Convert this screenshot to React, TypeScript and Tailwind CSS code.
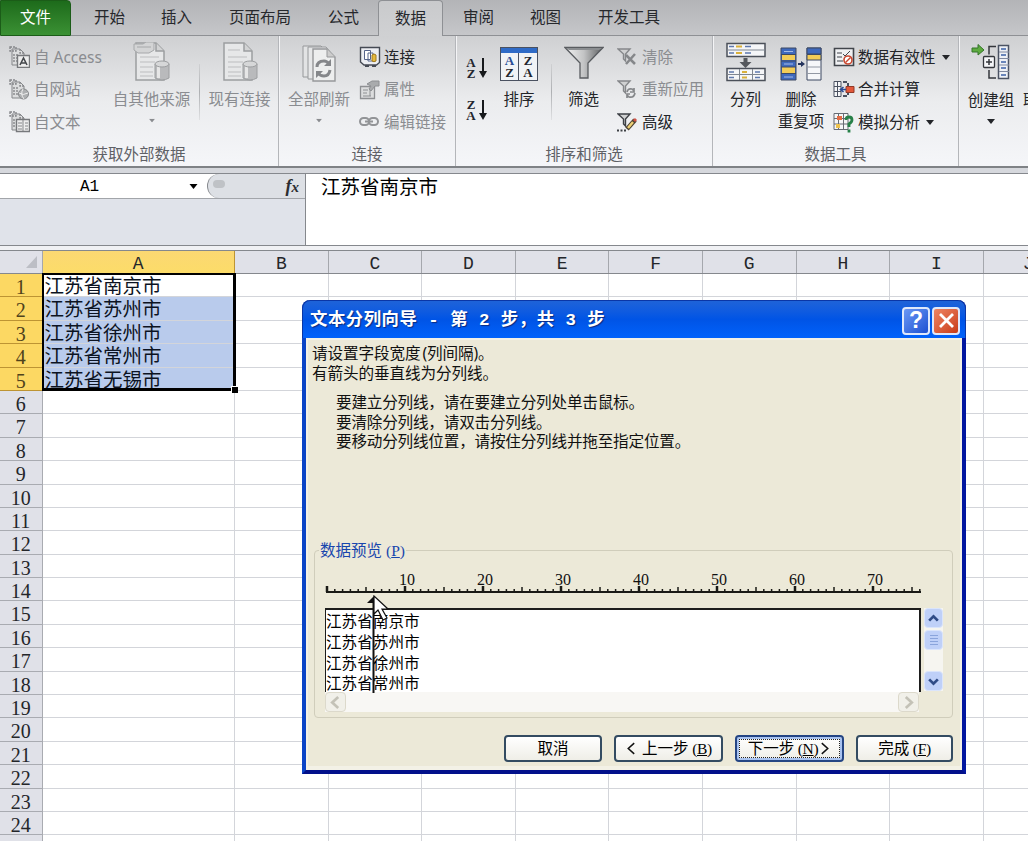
import type { ReactNode } from "react";

const COLUMNS = ["B", "C", "D", "E", "F", "G", "H", "I"];
const ROWS = Array.from({ length: 25 }, (_, i) => i + 1);
const CITIES = ["江苏省南京市", "江苏省苏州市", "江苏省徐州市", "江苏省常州市", "江苏省无锡市"];

function Caret({ className = "" }: { className?: string }) {
  return (
    <svg className={className} width="8" height="5" viewBox="0 0 8 5">
      <path d="M0 0h8L4 5z" fill="currentColor" />
    </svg>
  );
}

/* ---------- ribbon icons ---------- */

function ImportIcon({ kind }: { kind: "access" | "web" | "text" }) {
  return (
    <svg width="21" height="22" viewBox="0 0 21 22" fill="none" stroke="#85878a">
      <path d="M3 3h8l4 4v12H3z" fill="#dcddde" />
      <path d="M1 1h6v4H1zM11 3v4h4M5 8v9M8 8v9" strokeDasharray="2 1" strokeWidth="1.4" />
      {kind === "access" && (
        <>
          <path d="M8.5 9.5h12v12h-12z" fill="#eee" stroke="#77797c" strokeWidth="1.4" />
          <path d="M11 19l3.5-7 3.5 7M12 17h5" stroke="#45484c" strokeWidth="1.6" />
        </>
      )}
      {kind === "web" && (
        <>
          <circle cx="14.5" cy="15" r="5" fill="#adafb1" />
          <path d="M10 14q4 3 9 0M14 10q-3 5 1 10" stroke="#eee" />
        </>
      )}
      {kind === "text" && (
        <>
          <path d="M7.5 8.5h13v12h-13z" fill="#eee" stroke="#77797c" strokeWidth="1.4" />
          <path d="M14 9v11M9 12h4M9 15h4M9 18h4M16 12h3M16 15h3M16 18h3" />
        </>
      )}
    </svg>
  );
}

function SourceIcon({ layered }: { layered?: boolean }) {
  return (
    <svg width="38" height="40" viewBox="0 0 38 40" fill="none" stroke="#9c9ea0">
      <path d="M3 1h20l8 8v29H3z" fill="#e6e7e8" strokeWidth="1.5" />
      <path d="M23 1v8h8" fill="#d2d3d4" strokeWidth="1.5" />
      <path d="M7 15h19M7 20h15M7 25h13M7 30h13M7 34h13" stroke="#bcbdbf" />
      {layered ? <path d="M1 2h9l3-2h8v8l-5 3H5l-4-3zM4 5h14" fill="#d3d4d5" stroke="#a6a8aa" /> : <path d="M7 8h12" stroke="#bcbdbf" />}
      <path d="M22 22v14q7 4 14 0V22" fill="#b9babc" />
      <path d="M24 23v13h3V23z" fill="#e6e6e6" stroke="none" />
      <ellipse cx="29" cy="22" rx="7" ry="3" fill="#d6d7d8" />
    </svg>
  );
}

function RefreshIcon() {
  return (
    <svg width="35" height="37" viewBox="0 0 35 37" fill="none" stroke="#96989a">
      <path d="M1 1h18l5 5v26H1z" fill="#e2e3e4" />
      <path d="M6 2h18l4 5v27H6z" fill="#e6e7e8" />
      <path d="M11 4h14l8 8v24H11z" fill="#edeeee" strokeWidth="1.4" />
      <path d="M25 4v8h8" fill="#ccc" />
      <path d="M15 22q0-6 7-6 3 0 5 3M28 25q-1 6-6 6-4 0-6-3" stroke="#85878a" strokeWidth="3" />
      <path d="M29 14v7h-7zM14 33v-7h7z" fill="#85878a" stroke="none" />
    </svg>
  );
}

function ConnectIcon() {
  return (
    <svg width="22" height="22" viewBox="0 0 22 22" fill="none" stroke="#454a54">
      <path d="M1.5 1.500h19v15l-3 2.500H5l-3.500-3z" fill="#eceef2" strokeWidth="1.4" />
      <path d="M5.5 4.500h6v9h-6zM9 7h5v8H9z" fill="#fff" stroke="#55648a" />
      <path d="M13 9v6q2 1.500 4 0V9q-2-2-4 0z" fill="#e5b93c" stroke="#9d7820" />
      <path d="M6 20h4M13 20h4" strokeWidth="2" />
    </svg>
  );
}

function PropsIcon() {
  return (
    <svg width="22" height="20" viewBox="0 0 22 20" fill="none" stroke="#8e9093">
      <path d="M1.5 6.500h14v12h-14z" fill="#dcddde" strokeWidth="1.3" />
      <path d="M4 10h5M4 13h4M4 16h8M11 10v6" />
      <path d="M8 4l5-3h7v5h-4l-4 5-2-2 2-3z" fill="#a9abad" />
    </svg>
  );
}

function LinkIcon() {
  return (
    <svg width="20" height="12" viewBox="0 0 20 12" fill="none" stroke="#929497" strokeWidth="2">
      <rect x="1" y="2" width="9" height="7" rx="3.5" />
      <rect x="10" y="2" width="9" height="7" rx="3.5" />
      <path d="M6 5.500h8" />
    </svg>
  );
}

function SortIcon({ top, bottom }: { top: string; bottom: string }) {
  return (
    <div className="flex items-center gap-[3px]">
      <div className="flex w-[10px] flex-col items-center font-['Liberation_Serif',serif] text-[13px] font-bold leading-[11px] text-[#23262e]">
        <span>{top}</span>
        <span>{bottom}</span>
      </div>
      <svg width="8" height="22" viewBox="0 0 8 22">
        <path d="M3 1h2v13h3l-4 7-4-7h3z" fill="#17191c" />
      </svg>
    </div>
  );
}

function SortDialogIcon() {
  return (
    <div className="h-[34px] w-[38px] border-[1.5px] border-[#4a5160] bg-[#f1f3f6]">
      <div className="h-[5px] bg-[#2f6bc7]" />
      <div className="grid h-[27px] grid-cols-2 divide-x divide-[#4a5160] text-center font-['Liberation_Serif',serif] text-[13px] font-bold leading-[12px] text-[#23262e]">
        <div className="pt-0.5">
          <p className="text-[#274c94]">A</p>
          <p>Z</p>
        </div>
        <div className="pt-0.5">
          <p>Z</p>
          <p>A</p>
        </div>
      </div>
    </div>
  );
}

function FunnelIcon() {
  return (
    <svg width="40" height="34" viewBox="0 0 40 34">
      <defs>
        <linearGradient id="funnel">
          <stop offset="0" stopColor="#f4f4f4" />
          <stop offset="0.5" stopColor="#c2c3c4" />
          <stop offset="1" stopColor="#5c5e60" />
        </linearGradient>
      </defs>
      <path d="M1 1.500h38L24 17v15h-8V17z" fill="url(#funnel)" stroke="#595c60" strokeWidth="1.3" />
      <path d="M2 2h36l-3 2H5z" fill="#8b8e91" />
    </svg>
  );
}

function FilterIcon({ kind }: { kind: "clear" | "again" | "more" }) {
  const ink = kind === "more" ? "#3d4045" : "#85878a";
  return (
    <svg width="21" height="21" viewBox="0 0 21 21" fill="none" stroke={ink} strokeWidth="1.4">
      <path d="M1 2h12L8.500 7v7l-2-2V7z" fill="#d0d1d2" />
      {kind === "clear" && <path d="M9 8l9 9M18 7l-9 10" strokeWidth="2.5" />}
      {kind === "again" && <path d="M10 13q1-4 5-3l2 2M18 14q-1 5-6 4l-2-2M17 9v4h-4M10 19v-4h3" strokeWidth="1.7" />}
      {kind === "more" && (
        <>
          <path d="M0 18.500h10" strokeDasharray="2 1.5" strokeWidth="2" />
          <path d="M10 17l8-9" stroke="#4b4030" strokeWidth="4.5" />
          <path d="M11 16l5-6" stroke="#edcf74" strokeWidth="2.5" />
          <path d="M17 9l2-2" stroke="#cf5146" strokeWidth="3" />
        </>
      )}
    </svg>
  );
}

function SplitIcon() {
  return (
    <svg width="40" height="40" viewBox="0 0 40 40" fill="none" stroke="#4b5059">
      <path d="M1 1.500h38v13H1zM1 26.500h38v12H1z" fill="#f5f6f8" strokeWidth="1.5" />
      <path d="M1 8h38M1 32.500h38M13.500 27v11M26.500 27v11" stroke="#7f8690" />
      <path d="M3 4.500h5M19 4.500h6M3 11h5M19 11h6M3 30h5M29 30h5M3 35.500h5M29 35.500h5" stroke="#5f79ad" strokeWidth="1.4" />
      <path d="M10 4.500h6M10 11h6M16 30h5M16 35.500h5" stroke="#d9b03b" strokeWidth="2" />
      <path d="M17.500 16h4v4h4l-6 6-6-6h4z" fill="#55585d" stroke="none" />
    </svg>
  );
}

function DedupeIcon() {
  return (
    <svg width="42" height="34" viewBox="0 0 42 34" stroke="#3d4963">
      <path d="M1 1h15v32H1z" fill="#3e69bd" />
      <path d="M2 8h13v5H2zM2 20h13v6H2z" fill="#f2cc57" stroke="none" />
      <path d="M1 7.500h15M1 14h15M1 20h15M1 26.500h15" />
      <path d="M4 4.500h9M4 17h9M4 30h9" stroke="#a5bbe6" />
      <path d="M27 1h14v32H27z" fill="#f6f7f9" />
      <path d="M27 1h14v6H27z" fill="#3e69bd" />
      <path d="M27 7.500h14v5.500H27z" fill="#f2cc57" />
      <path d="M27 20h14M27 26.500h14" stroke="#9298a3" />
      <path d="M18 16h3v-2l4 3-4 3v-2h-3z" fill="#24345e" stroke="none" />
    </svg>
  );
}

function ValidityIcon() {
  return (
    <svg width="22" height="20" viewBox="0 0 22 20" fill="none" stroke="#41454b">
      <path d="M1.5 1.500h19v17h-19z" fill="#f0f1f3" strokeWidth="1.6" />
      <path d="M4 6h5M4 10h5M4 14h6M10 7l2 2 5-5" />
      <circle cx="15" cy="13" r="4" fill="#fff" stroke="#c9472f" strokeWidth="1.6" />
      <path d="M12.500 15.500l5-5" stroke="#c9472f" strokeWidth="1.5" />
    </svg>
  );
}

function MergeIcon() {
  return (
    <svg width="22" height="19" viewBox="0 0 22 19" fill="none" stroke="#4a5160">
      <path d="M1 1.500h7v15H1zM1 6.500h7M1 11.500h7M4.500 2v14" fill="#f5f6f8" />
      <path d="M10 2h4M10 16h4M15 3v3M15 13v2" strokeWidth="2" />
      <path d="M13 6.500h8v6h-8z" fill="#e2583b" stroke="#913a29" />
      <path d="M13 9.500H8M10.500 7l-3 2.500 3 2.500" stroke="#2c4d96" strokeWidth="1.6" />
    </svg>
  );
}

function WhatIfIcon() {
  return (
    <svg width="22" height="21" viewBox="0 0 22 21" fill="none" stroke="#666b73">
      <path d="M1 1.500h14v16H1z" fill="#f6f6f7" />
      <path d="M1 6.500h14M1 12h14M5.500 2v15M10.500 2v15" />
      <path d="M4 4h5v4H4z" fill="#e36b45" stroke="none" />
      <path d="M3 12h4v4H3z" fill="#eec24c" stroke="none" />
      <path d="M13 8q0-3 3-3t3 3q0 2-3 4v3M16 17.500v3" stroke="#278048" strokeWidth="2.8" />
    </svg>
  );
}

function GroupIcon() {
  return (
    <svg width="40" height="36" viewBox="0 0 40 36" fill="none" stroke="#34373c">
      <path d="M1 4h6V.5l6 5.500-6 5V8H1z" fill="#5dab3f" stroke="#35752a" />
      <path d="M25 2.500h-7v8M18 26v8h7" strokeWidth="1.5" />
      <rect x="12.5" y="12.5" width="11" height="11" rx="1" fill="#f5f6f8" strokeWidth="1.3" />
      <path d="M15 18h6M18 15v6" strokeWidth="1.5" />
      <path d="M27.500 1.500h10v33h-10z" fill="#eef1f6" stroke="#4b5363" strokeWidth="1.5" />
      <path d="M28 8h10M28 14.500h10M28 21h10M28 27.500h10" stroke="#8089a0" />
      <path d="M30 5h5M30 11h5M30 18h5M30 24h5M30 31h5" stroke="#3c61a8" strokeWidth="1.5" />
    </svg>
  );
}

/* ---------- ribbon ---------- */

function RibbonGroup({ label, className, children }: { label: string; className: string; children: ReactNode }) {
  return (
    <section className={`flex shrink-0 flex-col border-r border-[#b4b6ba] shadow-[1px_0_0_#f4f4f6] ${className}`}>
      <div className="flex h-[104px]">{children}</div>
      <p className="pt-px text-center leading-[28px] text-[#5f6166]">{label}</p>
    </section>
  );
}

function SmallButton({ icon, label, muted, menu }: { icon: ReactNode; label: string; muted?: boolean; menu?: boolean }) {
  return (
    <div className={`flex h-[32.5px] items-center whitespace-nowrap ${muted ? "text-[#8a8c90]" : "text-[#232529]"}`}>
      <span className="flex w-[25px] shrink-0">{icon}</span>
      {label}
      {menu && <Caret className="ml-1.5" />}
    </div>
  );
}

function BigButton({ icon, lines, muted, menu, className }: { icon: ReactNode; lines: string[]; muted?: boolean; menu?: boolean; className: string }) {
  return (
    <div className={`flex shrink-0 flex-col items-center pt-1.5 whitespace-nowrap ${muted ? "text-[#8a8c90]" : "text-[#232529]"} ${className}`}>
      <div className="flex h-[46px] items-start">{icon}</div>
      {lines.map((line) => (
        <span key={line} className="leading-[22px]">{line}</span>
      ))}
      {menu && <Caret className={muted ? "mt-2 scale-75" : "mt-2"} />}
    </div>
  );
}

function Separator() {
  return <div className="mt-7 h-14 w-px shrink-0 bg-gradient-to-b from-[#cfd0d2] via-[#aeb0b3] to-[#e0e1e3]" />;
}

function Tabs() {
  const tab = "flex items-center justify-center shrink-0";
  return (
    <nav className="flex h-9 bg-gradient-to-b from-[#b3b4b7] to-[#c6c7ca] text-[15.5px] text-[#26282c]">
      <div className={`${tab} w-[71px] rounded-tr-sm border border-[#1b5c18] bg-gradient-to-b from-[#1d6b1b] to-[#3b9134] text-white`}>文件</div>
      <div className="flex flex-1 border-b border-[#8e9094]">
        <div className={`${tab} w-[77px]`}>开始</div>
        <div className={`${tab} w-[57px]`}>插入</div>
        <div className={`${tab} w-[110px]`}>页面布局</div>
        <div className={`${tab} w-[57px]`}>公式</div>
        <div className={`${tab} -mb-px ml-1.5 w-[65px] rounded-t border border-b-0 border-[#8e9094] bg-gradient-to-b from-[#c9cacc] to-[#d0d1d3]`}>数据</div>
        <div className={`${tab} w-[71px]`}>审阅</div>
        <div className={`${tab} w-[63px]`}>视图</div>
        <div className={`${tab} w-[104px]`}>开发工具</div>
      </div>
    </nav>
  );
}

function Ribbon() {
  return (
    <div className="flex h-[132px] overflow-hidden border-b-2 border-[#7f8286] bg-gradient-to-b from-[#cfd0d2] via-[#ebecee] to-[#f5f6f9] text-[15.5px]">
      <RibbonGroup label="获取外部数据" className="w-[279px]">
        <div className="w-[104px] shrink-0 pt-[5px] pl-[9px]">
          <SmallButton muted icon={<ImportIcon kind="access" />} label="自 Access" />
          <SmallButton muted icon={<ImportIcon kind="web" />} label="自网站" />
          <SmallButton muted icon={<ImportIcon kind="text" />} label="自文本" />
        </div>
        <BigButton muted menu className="w-[95px]" icon={<SourceIcon layered />} lines={["自其他来源"]} />
        <Separator />
        <BigButton muted className="w-[79px]" icon={<SourceIcon />} lines={["现有连接"]} />
      </RibbonGroup>
      <RibbonGroup label="连接" className="w-[177px]">
        <BigButton muted menu className="w-[80px] pt-[9px] [&>div]:h-[43px]" icon={<RefreshIcon />} lines={["全部刷新"]} />
        <div className="pt-[5px]">
          <SmallButton icon={<ConnectIcon />} label="连接" />
          <SmallButton muted icon={<PropsIcon />} label="属性" />
          <SmallButton muted icon={<LinkIcon />} label="编辑链接" />
        </div>
      </RibbonGroup>
      <RibbonGroup label="排序和筛选" className="w-[257px]">
        <div className="flex w-[31px] shrink-0 flex-col gap-5 pt-[21px] pl-[10px]">
          <SortIcon top="A" bottom="Z" />
          <SortIcon top="Z" bottom="A" />
        </div>
        <BigButton className="w-[64px] pt-[11px] [&>div]:h-[41px]" icon={<SortDialogIcon />} lines={["排序"]} />
        <Separator />
        <BigButton className="w-[63px] pt-[10px] [&>div]:h-[42px]" icon={<FunnelIcon />} lines={["筛选"]} />
        <div className="pt-[5px] pl-[2px]">
          <SmallButton muted icon={<FilterIcon kind="clear" />} label="清除" />
          <SmallButton muted icon={<FilterIcon kind="again" />} label="重新应用" />
          <SmallButton icon={<FilterIcon kind="more" />} label="高级" />
        </div>
      </RibbonGroup>
      <RibbonGroup label="数据工具" className="w-[246px]">
        <BigButton className="w-[65px]" icon={<SplitIcon />} lines={["分列"]} />
        <BigButton className="w-[46px] pt-[11px] [&>div]:h-[41px]" icon={<DedupeIcon />} lines={["删除", "重复项"]} />
        <div className="pt-[5px] pl-[9px]">
          <SmallButton menu icon={<ValidityIcon />} label="数据有效性" />
          <SmallButton icon={<MergeIcon />} label="合并计算" />
          <SmallButton menu icon={<WhatIfIcon />} label="模拟分析" />
        </div>
      </RibbonGroup>
      <div className="flex shrink-0 text-[#232529]">
        <BigButton menu className="w-[64px] pt-2 [&>div]:h-[45px]" icon={<GroupIcon />} lines={["创建组"]} />
        <span className="pt-[53px] leading-[22px]">取</span>
      </div>
    </div>
  );
}

function FormulaBar() {
  return (
    <div className="flex h-[73px] border-y border-[#85888d] bg-[#e0e3ea]">
      <div className="flex h-[25px] w-[305px] shrink-0 border-b border-[#a2a5aa] bg-white">
        <div className="flex w-[207px] items-center pl-[80px] pt-px font-['Liberation_Mono',monospace] text-[16px] text-black">
          A1
          <Caret className="ml-auto mr-[8px] w-[11px]" />
        </div>
        <div className="flex flex-1 items-center justify-between rounded-l-full border-l border-[#85888d] bg-[#dde0e5] pr-[6px] pl-[5px]">
          <span className="mb-1 h-2 w-3 rounded-full bg-[#bfc2c6]" />
          <span className="font-['Liberation_Serif',serif] text-[18px] font-bold italic leading-none text-[#2b2d31]">
            f<span className="text-[15px]">x</span>
          </span>
        </div>
      </div>
      <div className="flex-1 border-l border-[#85888d] bg-white pl-[15px] text-[19.5px] leading-[25px] text-black">江苏省南京市</div>
    </div>
  );
}

function Sheet() {
  return (
    <div className="overflow-hidden">
      <div className="flex h-6 w-[1100px] border-y border-[#85888d] bg-[#e0e1e8] font-['Liberation_Mono',monospace] text-[18px] leading-[27px] text-[#24262a]">
        <div className="flex w-[42.5px] shrink-0 items-end justify-end border-r border-[#a5a7ad] p-[5px]">
          <svg width="11" height="12" viewBox="0 0 11 12"><path d="M11 0v12H0z" fill="#bcbec5" /></svg>
        </div>
        <div className="w-[192.5px] shrink-0 border-r border-[#bd9433] bg-gradient-to-b from-[#fbd872] to-[#fcdc69] text-center">A</div>
        {COLUMNS.map((name) => (
          <div key={name} className="w-[93.6px] shrink-0 border-r border-[#a5a7ad] text-center">{name}</div>
        ))}
        <div className="pl-[39px]">J</div>
      </div>
      <div className="relative w-[1100px] bg-white">
        {ROWS.map((n) => (
          <div key={n} className="flex h-[23.4px]">
            <div
              className={`w-[42.5px] shrink-0 border-r border-b text-center font-['Liberation_Serif',serif] text-[20px] leading-[26px] ${
                n <= 5 ? "border-[#bd9433] bg-[#fcd863] text-[#4f421b]" : "border-[#a9abb1] bg-[#e0e1e8] text-[#24262a]"
              }`}
            >
              {n}
            </div>
            <div
              className={`w-[192.5px] shrink-0 border-r border-b border-[#d3d5da] pl-[2px] text-[19.5px] leading-[24px] text-[#0c1322] ${
                n > 1 && n <= 5 ? "bg-[#b9cbec]" : ""
              }`}
            >
              {CITIES[n - 1]}
            </div>
            {COLUMNS.map((name) => (
              <div key={name} className="w-[93.6px] shrink-0 border-r border-b border-[#d3d5da]" />
            ))}
            <div className="flex-1 border-b border-[#d3d5da]" />
          </div>
        ))}
        <div className="pointer-events-none absolute -top-px left-[42px] h-[118px] w-[194px] border-[3px] border-t-2 border-l-2 border-black">
          <span className="absolute -right-[5px] -bottom-[5px] size-[7px] border-t border-l border-white bg-black" />
        </div>
      </div>
    </div>
  );
}

/* ---------- text to columns wizard ---------- */

function Ruler() {
  return (
    <svg className="block" width="597" height="24" viewBox="0 0 597 24">
      <path d="M1 19h595" stroke="#1a1a16" strokeWidth="2" />
      {Array.from({ length: 77 }, (_, i) => (
        <path
          key={i}
          d={`M${2 + i * 7.8} 19v-${i % 10 === 0 ? 6 : i % 5 === 0 ? 5 : 3}`}
          stroke="#1a1a16"
          strokeWidth={i % 10 === 0 ? 2.5 : 1.5}
        />
      ))}
      {[10, 20, 30, 40, 50, 60, 70].map((n) => (
        <text key={n} x={4 + n * 7.8} y="12" textAnchor="middle" fontFamily="Liberation Serif, serif" fontSize="16" fill="#111">
          {n}
        </text>
      ))}
    </svg>
  );
}

function Chevron({ dir, color, thin }: { dir: "up" | "down" | "left" | "right"; color: string; thin?: boolean }) {
  const d = { up: "M2 8l4-4 4 4", down: "M2 4l4 4 4-4", left: "M8.500 1L3 6l5.500 5", right: "M3.500 1L9 6l-5.500 5" }[dir];
  return (
    <svg width="13" height="13" viewBox="0 0 12 12">
      <path d={d} fill="none" stroke={color} strokeWidth={thin ? 1.4 : 2.5} />
    </svg>
  );
}

function DataPreview() {
  const grip = "flex w-[19px] items-center justify-center rounded-sm border border-[#dbe5fb] bg-[#bfd0f8]";
  const dead = "flex h-[20px] w-[21px] items-center justify-center rounded-sm border border-[#dcd9cb] bg-[#f1f0e9]";
  return (
    <fieldset className="h-[178px] min-w-0 rounded border border-[#d0cdbb] pr-[8px] pl-[10px]">
      <legend className="-ml-[6px] px-px text-[15.5px] leading-[20px] text-[#1846ad]">
        数据预览 <span className="font-['Liberation_Serif',serif]">(<u>P</u>)</span>
      </legend>
      <div className="pt-3">
        <Ruler />
      </div>
      <div className="mt-[11px] flex gap-[3px]">
        <div className="relative h-[84px] w-[596px] border-2 border-b-0 border-l border-[#1d1d1d] bg-white">
          {CITIES.slice(0, 4).map((city) => (
            <p key={city} className="h-[20.8px] text-[15.6px] leading-[22px] text-black">{city}</p>
          ))}
          <svg className="absolute -top-[15px] left-[41px]" width="28" height="98" viewBox="0 0 28 98">
            <path d="M6.500 4v94" stroke="#111" strokeWidth="2" />
            <path d="M0 8l7-7v7z" fill="#111" />
            <path d="M7 1v18l4-4 5 10 4-2-5-9h6z" fill="#fff" stroke="#111" strokeWidth="1.2" />
          </svg>
        </div>
        <div className="flex h-[83px] flex-col bg-[#f6f5f0]">
          <div className={`${grip} h-[20px]`}><Chevron dir="up" color="#2f4b86" /></div>
          <div className={`${grip} mt-0.5 h-[20px] flex-col gap-[2px]`}>
            {[0, 1, 2, 3].map((i) => (
              <span key={i} className="h-px w-2 bg-[#8aa4dc]" />
            ))}
          </div>
          <div className={`${grip} mt-auto h-[20px]`}><Chevron dir="down" color="#2f4b86" /></div>
        </div>
      </div>
      <div className="flex w-[594px] justify-between bg-[#f8f7f4]">
        <div className={dead}><Chevron dir="left" color="#c4c2b7" /></div>
        <div className={dead}><Chevron dir="right" color="#c4c2b7" /></div>
      </div>
    </fieldset>
  );
}

function DialogButton({ children, primary, className }: { children: ReactNode; primary?: boolean; className: string }) {
  return (
    <button
      className={`flex h-[27px] items-center justify-center whitespace-pre rounded-[4px] border-2 bg-gradient-to-b from-white to-[#efeee7] text-[15.5px] text-black ${
        primary ? "border-[#244584] shadow-[inset_0_0_0_2px_#a9c3f0]" : "border-[#334b61]"
      } ${className}`}
    >
      {primary ? (
        <span className="mx-0.5 flex h-[19px] w-full items-center justify-center border border-dotted border-[#222]">{children}</span>
      ) : (
        children
      )}
    </button>
  );
}

function Key({ letter }: { letter: string }) {
  return (
    <span className="font-['Liberation_Serif',serif] tracking-[-0.3px]"> (<u>{letter}</u>)</span>
  );
}

function Wizard() {
  const caption = "flex size-[28px] items-center justify-center rounded-[4px] border-2 border-[#dfe8fb]";
  return (
    <div className="absolute top-[300px] left-[302px] flex h-[474px] w-[664px] flex-col rounded-t-lg border-4 border-t-0 border-t-[#0a3fb5] border-r-[#0217a0] border-b-[#02108a] border-l-[#0a44c6] bg-[#ece9d8]">
      <div className="-mx-1 flex h-[38px] shrink-0 items-center gap-[2px] rounded-t-lg border border-b-0 border-[#0a36a6] bg-gradient-to-b from-[#1e63d8] via-[#0054e6] to-[#0162fb] pt-0.5 pr-[5px] pl-[7px]">
        <h1 className="mr-auto whitespace-pre pt-0.5 font-['Liberation_Mono','Noto_Sans_CJK_SC',monospace] text-[17.4px] font-bold tracking-[0.5px] text-white [text-shadow:1px_1px_1px_#0a2b80]">
          文本分列向导 - 第 2 步，共 3 步
        </h1>
        <div className={`${caption} bg-gradient-to-br from-[#6b97f4] to-[#1d4fd2] font-['Liberation_Sans',sans-serif] text-[23px] font-bold text-white`}>?</div>
        <div className={`${caption} bg-gradient-to-br from-[#ee8462] to-[#c93a14]`}>
          <svg width="17" height="17" viewBox="0 0 17 17"><path d="M2 2l13 13M15 2L2 15" stroke="#fff" strokeWidth="2.8" /></svg>
        </div>
      </div>
      <div className="flex flex-1 flex-col border-2 border-b-4 border-[#f3f1e6] pr-[7px] pl-[6px]">
        <div className="h-[200px] pt-[4px] text-[15.6px] leading-[19.6px] tracking-[-0.1px] text-[#111]">
          <p className="-ml-[2px]">请设置字段宽度<span className="pl-0.5">(</span>列间隔)。</p>
          <p className="-ml-[2px]">有箭头的垂直线为分列线。</p>
          <div className="pt-[10px] pl-[22px] tracking-[-0.2px]">
            <p>要建立分列线，请在要建立分列处单击鼠标。</p>
            <p>要清除分列线，请双击分列线。</p>
            <p>要移动分列线位置，请按住分列线并拖至指定位置。</p>
          </div>
        </div>
        <DataPreview />
        <div className="mt-[17px] flex justify-end gap-3">
          <DialogButton className="w-[98px]">取消</DialogButton>
          <DialogButton className="w-[109px]">
            <Chevron thin dir="left" color="#111" /> 上一步<Key letter="B" />
          </DialogButton>
          <DialogButton primary className="w-[109px]">
            下一步<Key letter="N" /> <Chevron thin dir="right" color="#111" />
          </DialogButton>
          <DialogButton className="w-[97px]">完成<Key letter="F" /></DialogButton>
        </div>
      </div>
    </div>
  );
}

export default function App() {
  return (
    <main className="relative h-[841px] w-[1028px] overflow-hidden bg-[#d6d8dd] font-['Noto_Sans','Noto_Sans_CJK_SC',sans-serif]">
      <Tabs />
      <Ribbon />
      <div className="h-[5px]" />
      <FormulaBar />
      <div className="h-1 bg-[#f0f1f4]" />
      <Sheet />
      <Wizard />
    </main>
  );
}
